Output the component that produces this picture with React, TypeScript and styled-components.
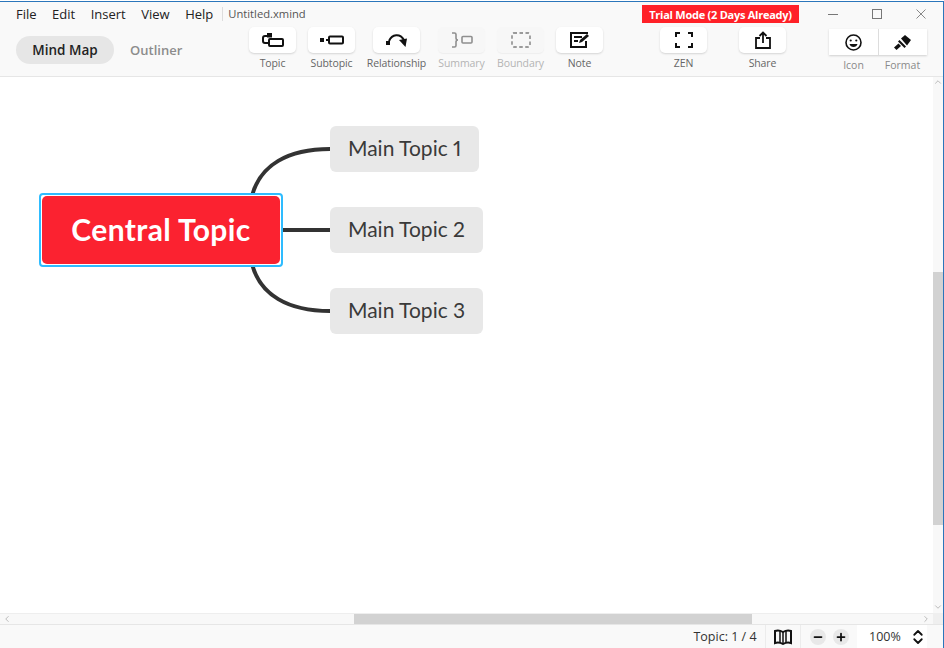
import React from 'react'
import styled, { createGlobalStyle } from 'styled-components'
import { ChevronLeft, ChevronRight, ChevronUp, ChevronDown, ChevronsUpDown, Minus, Plus } from 'lucide-react'

const GlobalStyle = createGlobalStyle`
  html, body {
    margin: 0;
    padding: 0;
    background: #fff;
  }
  body {
    font-family: "Open Sans", "Noto Sans", sans-serif;
  }
`

const Window = styled.div`
  box-sizing: border-box;
  width: 944px;
  height: 647px;
  margin-top: 1px;
  display: flex;
  flex-direction: column;
  overflow: hidden;
  background: #fff;
  border-top: 1px solid #2b76bb;
  border-right: 1px solid #2b76bb;
`

const Header = styled.header`
  box-sizing: border-box;
  height: 75px;
  flex: none;
  background: #f9f9f9;
  border-bottom: 1px solid #e6e6e6;
  display: flex;
  flex-direction: column;
`

const TitleRow = styled.div`
  display: flex;
  align-items: center;
  height: 24px;
  padding-left: 16px;
  flex: none;
`

const Menu = styled.nav`
  display: flex;
  align-items: center;
  gap: 15.5px;
`

const MenuItem = styled.span`
  font-size: 13px;
  color: #222;
`

const FileName = styled.span`
  font-size: 11.2px;
  color: #555;
  margin-left: 9px;
  padding-left: 5px;
  border-left: 1px solid #ddd;
  line-height: 14px;
`

const TrialBadge = styled.div`
  margin-left: auto;
  width: 157px;
  height: 18px;
  background: #ff2128;
  color: #fff;
  font-size: 11px;
  font-weight: 700;
  letter-spacing: -0.25px;
  display: flex;
  align-items: center;
  justify-content: center;
`

const WindowControls = styled.div`
  display: flex;
  align-items: center;
  gap: 34px;
  margin-left: 29px;
  margin-right: 17px;
`

const MaxBox = styled.span`
  box-sizing: border-box;
  width: 10px;
  height: 10px;
  border: 1px solid #777;
`

const MinLine = styled.span`
  width: 10px;
  height: 1px;
  background: #777;
`

const ToolRow = styled.div`
  display: flex;
  align-items: flex-start;
  padding-left: 16px;
  flex: 1;
`

const ModeSwitch = styled.div`
  display: flex;
  align-items: center;
  margin-top: 10px;
  width: 233px;
  flex: none;
`

const ModePill = styled.span`
  box-sizing: border-box;
  width: 98px;
  height: 28px;
  border-radius: 14px;
  background: #e6e6e6;
  display: flex;
  align-items: center;
  justify-content: center;
  font-size: 13.5px;
  font-weight: 600;
  color: #222;
`

const ModeOption = styled.span`
  margin-left: 16px;
  font-size: 13px;
  font-weight: 600;
  color: #8c8c8c;
`

const Tool = styled.div<{ $gap: number }>`
  width: 47px;
  margin-left: ${props => props.$gap}px;
  flex: none;
  display: flex;
  flex-direction: column;
  align-items: center;
  margin-top: 1px;
`

const ToolButton = styled.div<{ $disabled?: boolean }>`
  box-sizing: border-box;
  width: 47px;
  height: 26px;
  border-radius: 5px;
  background: ${props => props.$disabled ? '#f7f7f7' : '#fff'};
  box-shadow: ${props => props.$disabled ? '0 1px 1px #eee' : '0 1px 2px #d4d4d4'};
  display: flex;
  align-items: center;
  justify-content: center;
`

const ToolLabel = styled.span<{ $disabled?: boolean }>`
  margin-top: 3px;
  font-size: 10.5px;
  line-height: 14px;
  white-space: nowrap;
  letter-spacing: -0.1px;
  color: ${props => props.$disabled ? '#b4b4b4' : '#666'};
`

const SideGroup = styled.div`
  margin-left: 43px;
  margin-top: 3px;
  display: flex;
  flex-direction: column;
  flex: none;
`

const SideButtons = styled.div`
  display: flex;
  width: 98px;
  height: 26px;
  background: #fff;
  box-shadow: 0 1px 2px #cfcfcf;
`

const SideButton = styled.div`
  flex: 1;
  display: flex;
  align-items: center;
  justify-content: center;
  & + & {
    border-left: 1px solid #ddd;
  }
`

const SideLabels = styled.div`
  display: flex;
  width: 98px;
  margin-top: 3px;
`

const SideLabel = styled.span`
  flex: 1;
  text-align: center;
  font-size: 10.5px;
  line-height: 14px;
  color: #8a8a8a;
`

const Body = styled.div`
  flex: 1;
  display: flex;
  min-height: 0;
`

const CanvasColumn = styled.div`
  flex: 1;
  display: flex;
  flex-direction: column;
  min-width: 0;
`

const Canvas = styled.main`
  position: relative;
  flex: 1;
  background: #fff;
  overflow: hidden;
`

const Lines = styled.svg`
  position: absolute;
  left: 0;
  top: 0;
`

const Selection = styled.div`
  position: absolute;
  left: 39px;
  top: 116px;
  box-sizing: border-box;
  width: 244px;
  height: 74px;
  padding: 1px;
  border: 2px solid #2ebcff;
  border-radius: 4px;
  background: #fff;
`

const CentralTopic = styled.div`
  box-sizing: border-box;
  height: 100%;
  padding-bottom: 3px;
  border-radius: 5px;
  background: #fb2230;
  color: #fff;
  font-family: Lato, sans-serif;
  font-size: 30px;
  font-weight: 700;
  letter-spacing: 0.4px;
  display: flex;
  align-items: center;
  justify-content: center;
`

const MainTopic = styled.div<{ $top: number }>`
  position: absolute;
  left: 330px;
  top: ${props => props.$top}px;
  box-sizing: border-box;
  height: 46px;
  padding: 0 18px 3px;
  border-radius: 6px;
  background: #e8e8e8;
  color: #3a3a3a;
  font-family: Lato, sans-serif;
  font-size: 21px;
  font-variant-numeric: proportional-nums;
  display: flex;
  align-items: center;
  white-space: nowrap;
`

const HScrollbar = styled.div`
  box-sizing: border-box;
  height: 11px;
  flex: none;
  padding: 0 2px;
  background: #f8f8f8;
  border-top: 1px solid #eee;
  display: flex;
  align-items: center;
  justify-content: space-between;
  position: relative;
  color: #b0b0b0;
`

const HThumb = styled.div`
  position: absolute;
  left: 354px;
  top: 0;
  width: 398px;
  height: 10px;
  background: #d2d2d2;
`

const VColumn = styled.div`
  width: 10px;
  flex: none;
  display: flex;
  flex-direction: column;
`

const VScrollbar = styled.div`
  position: relative;
  flex: 1;
  padding: 0 0 1px;
  background: #f8f8f8;
  display: flex;
  flex-direction: column;
  align-items: center;
  justify-content: space-between;
  color: #b0b0b0;
`

const VThumb = styled.div`
  position: absolute;
  left: 0;
  top: 195px;
  width: 10px;
  height: 253px;
  background: #d2d2d2;
`

const ScrollCorner = styled.div`
  height: 11px;
  flex: none;
  background: #efefef;
`

const StatusBar = styled.footer`
  box-sizing: border-box;
  height: 24px;
  flex: none;
  background: #f9f9f9;
  border-top: 1px solid #e6e6e6;
  display: flex;
  align-items: stretch;
  justify-content: flex-end;
  padding-right: 16px;
`

const StatusCell = styled.div<{ $width: number }>`
  box-sizing: border-box;
  width: ${props => props.$width}px;
  display: flex;
  align-items: center;
  justify-content: center;
  & + & {
    border-left: 1px solid #ececec;
  }
`

const ZoomCell = styled.div`
  box-sizing: border-box;
  width: 70px;
  padding-left: 12px;
  background: #fff;
  display: flex;
  align-items: center;
  justify-content: space-between;
  color: #111;
`

const StatusText = styled.span`
  font-size: 12.5px;
  color: #333;
  white-space: nowrap;
`

const ZoomButton = styled.span`
  width: 16px;
  height: 16px;
  border-radius: 50%;
  background: #e8e8e8;
  display: flex;
  align-items: center;
  justify-content: center;
  color: #111;
`

const ZoomGroup = styled.div`
  display: flex;
  gap: 7px;
`

const CloseIcon = () => (
  <svg width="10" height="10" viewBox="0 0 10 10" fill="none" stroke="#888" strokeWidth="1">
    <path d="M.5.5l9 9M9.500.5l-9 9" />
  </svg>
)

const TopicIcon = () => (
  <svg width="22" height="14" viewBox="0 0 22 14" fill="none" stroke="#111" strokeWidth="2">
    <rect x="5" y="0" width="5" height="4.500" fill="#111" stroke="none" />
    <path d="M6 3H3C1.800 3 1 3.800 1 5V8c0 1.200.8 2 2 2h4" />
    <rect x="7" y="6" width="14" height="7" rx="1" />
  </svg>
)

const SubtopicIcon = () => (
  <svg width="24" height="10" viewBox="0 0 24 10" fill="none" stroke="#111" strokeWidth="2">
    <rect x="0" y="3" width="4" height="4" fill="#111" stroke="none" />
    <path d="M6 5h2" />
    <rect x="9" y="1.500" width="14" height="7" rx="1" />
  </svg>
)

const RelationshipIcon = () => (
  <svg width="22" height="14" viewBox="0 0 22 14" fill="none">
    <rect x="0" y="8" width="4" height="4" fill="#111" />
    <path d="M3 8C6 1 14 0 18 7" stroke="#111" strokeWidth="2" />
    <path d="M13 7l8-1.500L19.500 14z" fill="#111" />
  </svg>
)

const SummaryIcon = () => (
  <svg width="22" height="16" viewBox="0 0 22 16" fill="none" stroke="#8f8f8f" strokeWidth="1.600">
    <path d="M1 1h2.500c1 0 1.500.6 1.500 1.500V6c0 1 .6 2 2 2-1.400 0-2 1-2 2v3.500c0 .9-.5 1.500-1.500 1.500H1" />
    <rect x="11" y="4.500" width="10" height="6.500" rx="1" />
  </svg>
)

const BoundaryIcon = () => (
  <svg width="20" height="16" viewBox="0 0 20 16" fill="none" stroke="#9a9a9a" strokeWidth="1.800" strokeDasharray="3.500 2.500">
    <rect x="1" y="1" width="18" height="14" rx="1.500" />
  </svg>
)

const NoteIcon = () => (
  <svg width="20" height="16" viewBox="0 0 20 16" fill="none" stroke="#111" strokeWidth="2">
    <path d="M18 1H1v14h15V9" />
    <path d="M4 5h8M4 9h4" />
    <path d="M9 11l1-3 7-6 2 2-7 6z" fill="#111" stroke="none" />
  </svg>
)

const ZenIcon = () => (
  <svg width="18" height="16" viewBox="0 0 18 16" fill="none" stroke="#111" strokeWidth="2">
    <path d="M1 5V1h4M13 1h4v4M17 11v4h-4M5 15H1v-4" />
  </svg>
)

const ShareIcon = () => (
  <svg width="16" height="18" viewBox="0 0 16 18" fill="none" stroke="#111" strokeWidth="1.800">
    <path d="M5 7H1v10h14V7h-4" />
    <path d="M8 12V1.500M4.500 5L8 1.500 11.500 5" />
  </svg>
)

const SmileIcon = () => (
  <svg width="17" height="17" viewBox="0 0 17 17" fill="none" stroke="#111" strokeWidth="1.600">
    <circle cx="8.500" cy="8.500" r="7.500" />
    <circle cx="5.700" cy="6.500" r="1.100" fill="#111" stroke="none" />
    <circle cx="11.300" cy="6.500" r="1.100" fill="#111" stroke="none" />
    <path d="M4.500 10h8c-.5 2-2 3-4 3s-3.500-1-4-3z" fill="#111" stroke="none" />
  </svg>
)

const BrushIcon = () => (
  <svg width="17" height="15" viewBox="0 0 17 15" fill="#111">
    <path d="M7 3.500L11 0l6 5-4 5.500z" />
    <path d="M5.500 5l6.500 6.500-1.500 1.500L4 6.500z" />
    <path d="M4.500 8.500l2.500 2.500L2.500 15 0 12.500z" />
  </svg>
)

const MapBookIcon = () => (
  <svg width="18" height="16" viewBox="0 0 18 16" fill="none" stroke="#111" strokeWidth="2">
    <path d="M1 2c2.500-1 5-.8 8 1 3-1.800 5.500-2 8-1v12c-2.500-1-5-.8-8 1-3-1.800-5.500-2-8-1z" />
    <path d="M6 2v12M9 3v12M12 2v12" strokeWidth="1.500" />
  </svg>
)

const tools = [
  { label: 'Topic', gap: 0, icon: <TopicIcon /> },
  { label: 'Subtopic', gap: 12, icon: <SubtopicIcon /> },
  { label: 'Relationship', gap: 18, icon: <RelationshipIcon /> },
  { label: 'Summary', gap: 18, icon: <SummaryIcon />, disabled: true },
  { label: 'Boundary', gap: 12, icon: <BoundaryIcon />, disabled: true },
  { label: 'Note', gap: 12, icon: <NoteIcon /> },
  { label: 'ZEN', gap: 57, icon: <ZenIcon /> },
  { label: 'Share', gap: 32, icon: <ShareIcon /> },
]

const App: React.FC = () => {
  return (
    <Window>
      <GlobalStyle />
      <Header>
        <TitleRow>
          <Menu>
            { ['File', 'Edit', 'Insert', 'View', 'Help'].map(m => <MenuItem key={m}>{ m }</MenuItem>) }
          </Menu>
          <FileName>Untitled.xmind</FileName>
          <TrialBadge>Trial Mode (2 Days Already)</TrialBadge>
          <WindowControls>
            <MinLine />
            <MaxBox />
            <CloseIcon />
          </WindowControls>
        </TitleRow>
        <ToolRow>
          <ModeSwitch>
            <ModePill>Mind Map</ModePill>
            <ModeOption>Outliner</ModeOption>
          </ModeSwitch>
          { tools.map(t => (
            <Tool key={t.label} $gap={t.gap}>
              <ToolButton $disabled={t.disabled}>{ t.icon }</ToolButton>
              <ToolLabel $disabled={t.disabled}>{ t.label }</ToolLabel>
            </Tool>
          ))}
          <SideGroup>
            <SideButtons>
              <SideButton><SmileIcon /></SideButton>
              <SideButton><BrushIcon /></SideButton>
            </SideButtons>
            <SideLabels>
              <SideLabel>Icon</SideLabel>
              <SideLabel>Format</SideLabel>
            </SideLabels>
          </SideGroup>
        </ToolRow>
      </Header>
      <Body>
        <CanvasColumn>
          <Canvas>
            <Lines width="933" height="536" fill="none" stroke="#333" strokeWidth="4">
              <path d="M252 119C260 88 288 72 330 72" />
              <path d="M283 153H330" />
              <path d="M252 187C260 218 288 234 330 234" />
            </Lines>
            <Selection>
              <CentralTopic>Central Topic</CentralTopic>
            </Selection>
            <MainTopic $top={49}>Main Topic 1</MainTopic>
            <MainTopic $top={130}>Main Topic 2</MainTopic>
            <MainTopic $top={211}>Main Topic 3</MainTopic>
          </Canvas>
          <HScrollbar>
            <HThumb />
            <ChevronLeft size={10} />
            <ChevronRight size={10} />
          </HScrollbar>
        </CanvasColumn>
        <VColumn>
          <VScrollbar>
            <VThumb />
            <ChevronUp size={10} />
            <ChevronDown size={10} />
          </VScrollbar>
          <ScrollCorner />
        </VColumn>
      </Body>
      <StatusBar>
        <StatusCell $width={80}><StatusText>Topic: 1 / 4</StatusText></StatusCell>
        <StatusCell $width={35}><MapBookIcon /></StatusCell>
        <StatusCell $width={57}>
          <ZoomGroup>
            <ZoomButton><Minus size={12} strokeWidth={3.500} /></ZoomButton>
            <ZoomButton><Plus size={12} strokeWidth={3.500} /></ZoomButton>
          </ZoomGroup>
        </StatusCell>
        <ZoomCell>
          <StatusText>100%</StatusText>
          <ChevronsUpDown size={18} strokeWidth={2.400} />
        </ZoomCell>
      </StatusBar>
    </Window>
  )
}

export default App
